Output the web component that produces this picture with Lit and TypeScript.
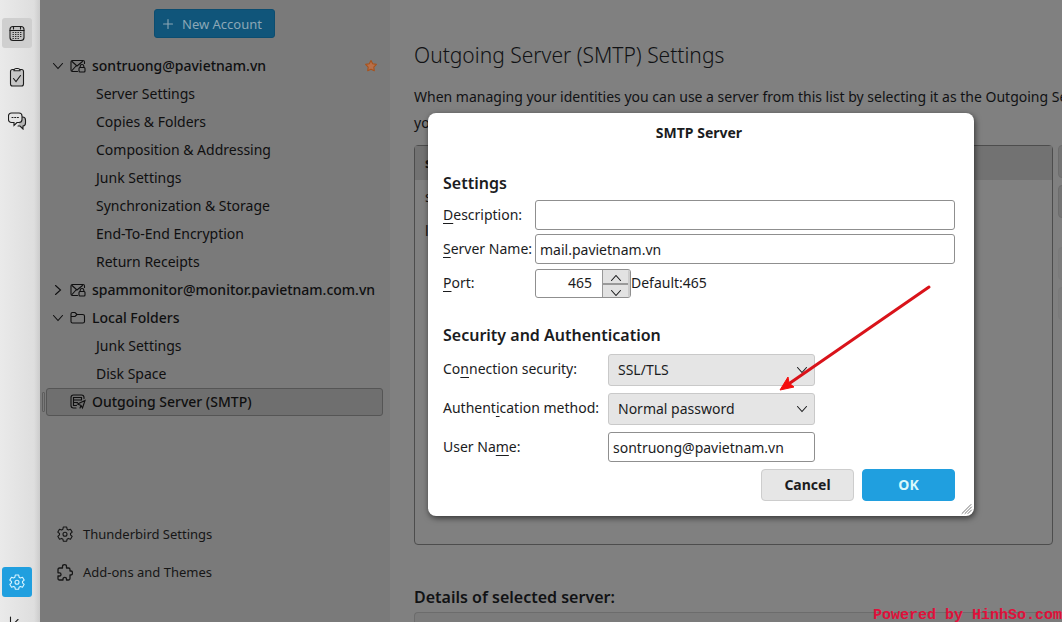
import { LitElement, html, css, svg, nothing } from "lit";
import { customElement, state } from "lit/decorators.js";
import { classMap } from "lit/directives/class-map.js";

const icons: Record<string, unknown> = {
  calendar: svg`<rect x="1" y="1.500" width="14" height="14" rx="3" fill="#0001"/><path d="M1 5.500h14M4.500 1.500v2.500M11.500 1.500v2.500"/><path d="M3.500 7.500h9M3.500 9.500h9M3.500 11.500h9M3.500 13.500h7" stroke-dasharray="1.400 1.100" stroke-linecap="butt" stroke-width="0.9"/>`,
  tasks: svg`<rect x="1.500" y="1.500" width="13" height="16.500" rx="2" fill="#0002"/><path d="M5 2c0-2 6-2 6 0v.8H5z" fill="#eee"/><path d="M4.500 10.500l2.500 3 4.500-6"/>`,
  chat: svg`<path d="M13.500 5h1c1.800 0 3 1.200 3 3v3c0 1.500-1 2.800-2.500 3v3l-3-3h-2" fill="#0003"/><path d="M3.500 1h7.500c1.800 0 3 1.200 3 3v3.500c0 1.800-1.200 3-3 3H9l-3 3v-3H3.500c-1.800 0-3-1.200-3-3V4c0-1.800 1.200-3 3-3z" fill="#e4e4e4"/><path d="M4 5.500h1M6.700 5.500h1M9.400 5.500h1"/>`,
  gear: svg`<path d="M6.300 1h3.400l.4 2.200 1.300.8 2.100-.8 1.700 2.900L13.500 7.500v1.300l1.700 1.500-1.700 2.900-2.100-.8-1.300.8-.4 2H6.300l-.4-2-1.300-.8-2.100.8L.8 10.300 2.500 8.800V7.500L.8 6.100l1.700-2.900 2.100.8 1.300-.8z" stroke-linejoin="round"/><circle cx="8" cy="8.200" r="2"/>`,
  addon: svg`<path d="M1 5.500c0-1 .5-1.500 1.500-1.500h3V2.500c0-2.400 4-2.400 4 0V4h2c1 0 1.500.5 1.500 1.500V7h.8c2.300 0 2.300 4 0 4H13v3.500c0 1-.5 1.500-1.500 1.500H9.500v-1c0-2.200-3.500-2.200-3.500 0v1H2.500C1.500 16 1 15.500 1 14.500V12h1.500c2 0 2-3.200 0-3.200H1z" stroke-width="1.300" stroke-linejoin="round"/>`,
  mail: svg`<path d="M7.500 13.500h-5c-1 0-1.500-.5-1.500-1.500V4c0-1 .5-1.500 1.500-1.500h10.500c1 0 1.500.5 1.500 1.500v1.500"/><path d="M2 3.500l5 4.500 5.500-4.500M2 12.500l4-4.500"/><rect x="9" y="9.500" width="6" height="4.500" rx="1"/><path d="M10.200 9.500V8c0-2 3.600-2 3.600 0v1.500"/>`,
  folder: svg`<path d="M1 4c0-1 .5-1.500 1.500-1.500H5l2 2h5.500c1.200 0 2 .6 2 1.500v5.500c0 1-.8 1.500-1.700 1.500H2.500c-1 0-1.500-.5-1.500-1.500zM1 6.500h4l2-2"/>`,
  outgoing: svg`<path d="M6 14H3.500C2 14 1 13 1 11.500v-8C1 2 2 1 3.500 1h8C13 1 14 2 14 3.500v1"/><path d="M3.500 3.500h8v2.500h-8zM3.500 6v5.500h3M3.500 8.500h4M7.500 10l7.500-3.500-2.500 7.500-1.500-2.500zM11 11.500l-1 2.500"/>`,
  down: svg`<path d="M3.500 5.500L8 10.500l4.500-5"/>`,
  right: svg`<path d="M5.500 3.500L10.500 8l-5 4.500"/>`,
  plus: svg`<path d="M8 3.500v9M3.500 8h9"/>`,
  star: svg`<path d="M8 2.500l1.700 3.300 3.700.6-2.600 2.700.5 3.700L8 11.200l-3.300 1.600.5-3.700-2.600-2.700 3.700-.6z" fill="#b8704a" stroke="#a8521c" stroke-linejoin="round"/>`,
  collapse: svg`<path d="M1.500 2v13M5 8.500h10M9 4.500l-4 4 4 4"/>`,
};

const icon = (name: string, w = 16, h = 16) =>
  html`<svg class="icon" width=${w} height=${h} viewBox="0 0 ${w} ${h}" aria-hidden="true">${icons[name]}</svg>`;

const iconStyles = css`
  .icon { display: block; flex: none; fill: none; stroke: currentColor; stroke-width: 1.1; stroke-linecap: round; }
  :host, *, *::before, *::after { box-sizing: border-box; }
  button, input, select { font: inherit; color: inherit; margin: 0; }
`;

@customElement("spaces-rail")
class SpacesRail extends LitElement {
  static styles = [iconStyles, css`
    :host { display: flex; flex-direction: column; gap: 14px; padding: 18px 8px 0 2px; color: #1c1c1c;
      background: linear-gradient(90deg, #eaeaea, #dedede 34px, #cccccc); overflow: hidden; }
    .space { flex: none; display: grid; place-items: center; width: 30px; height: 30px; border: 0; border-radius: 3px; background: none; padding: 0; }
    .current { background: #cfcfcf; }
    .settings { margin-top: auto; background: #209fdf; color: #d8f4ff; }
    .foot { height: 11px; padding-top: 4px; overflow: hidden; display: flex; justify-content: center; }
  `];
  render() {
    return html`
      <button class="space current" aria-label="Calendar">${icon("calendar", 16, 17)}</button>
      <button class="space" aria-label="Tasks">${icon("tasks", 16, 19)}</button>
      <button class="space" aria-label="Chat">${icon("chat", 19, 18)}</button>
      <button class="space settings" aria-label="Settings">${icon("gear")}</button>
      <div class="foot">${icon("collapse")}</div>
    `;
  }
}

interface AccountNode { label: string; icon: string; open?: boolean; star?: boolean; selected?: boolean; children?: string[]; }

const accounts: AccountNode[] = [
  { label: "sontruong@pavietnam.vn", icon: "mail", open: true, star: true,
    children: ["Server Settings", "Copies & Folders", "Composition & Addressing", "Junk Settings",
      "Synchronization & Storage", "End-To-End Encryption", "Return Receipts"] },
  { label: "spammonitor@monitor.pavietnam.com.vn", icon: "mail", open: false },
  { label: "Local Folders", icon: "folder", open: true, children: ["Junk Settings", "Disk Space"] },
  { label: "Outgoing Server (SMTP)", icon: "outgoing", selected: true },
];

@customElement("account-sidebar")
class AccountSidebar extends LitElement {
  static styles = [iconStyles, css`
    :host { display: flex; flex-direction: column; background: #7a7a7a; color: #0f0f10; min-width: 0; }
    .new { align-self: center; display: flex; align-items: center; gap: 6px; height: 29px; margin: 9px 1px 14px 0;
      padding: 0 12px 0 5px; border: 1px solid #0c4d70; border-radius: 3px; background: #10557a; color: #8ba7b6; font-size: 13px; }
    ul { list-style: none; margin: 0; padding: 0; }
    .row { display: flex; align-items: center; height: 28px; padding: 0 11px; text-decoration: none; color: inherit; white-space: nowrap;
      border: 1px solid transparent; border-radius: 3px; margin: 0 7px 0 6px; }
    .top { padding: 0 3px; font-weight: 500; }
    .twisty { width: 16px; margin-right: 4px; }
    .label { margin-left: 6px; flex: 1; }
    .child { padding-left: 49px; }
    .selected { background: #6f6f6f; border-color: #555; }
    .grip { position: relative; }
    .grip::before { content: ""; position: absolute; left: 2px; top: 4px; width: 3px; height: 20px; border: 1px solid #5d5d5d; border-radius: 1px; }
    .links { margin-top: auto; padding-bottom: 31px; font-size: 13px; }
    .link { display: flex; align-items: center; gap: 10px; height: 38px; padding-left: 17px; color: #161616; text-decoration: none; }
  `];
  render() {
    return html`
      <button class="new">${icon("plus")}<span>New Account</span></button>
      <ul>
        ${accounts.map((a) => html`
          <li class=${classMap({ grip: !!a.selected })}>
            <a href="#" class=${classMap({ row: true, top: true, selected: !!a.selected })}>
              <span class="twisty">${a.open === undefined ? nothing : icon(a.open ? "down" : "right")}</span>
              ${icon(a.icon)}<span class="label">${a.label}</span>${a.star ? icon("star") : nothing}
            </a>
            ${a.children ? html`<ul>${a.children.map((c) => html`<li><a href="#" class="row child">${c}</a></li>`)}</ul>` : nothing}
          </li>`)}
      </ul>
      <div class="links">
        <a class="link" href="#">${icon("gear")}Thunderbird Settings</a>
        <a class="link" href="#">${icon("addon", 16, 17)}Add-ons and Themes</a>
      </div>
    `;
  }
}

@customElement("smtp-pane")
class SmtpPane extends LitElement {
  static styles = [iconStyles, css`
    :host { display: block; background: #808080; color: #111214; padding: 40px 0 0 24px; overflow: hidden; min-width: 0; }
    h1 { margin: 0 0 14px; font-size: 21px; line-height: 30px; font-weight: 300; white-space: nowrap; }
    p { margin: 0 0 9px; line-height: 26px; white-space: nowrap; }
    .servers { display: flex; gap: 5px; }
    .list { flex: 1; height: 400px; margin: 0; padding: 0; list-style: none; border: 1px solid #4d4d4d; border-radius: 4px; }
    .list li { height: 34px; line-height: 34px; padding-left: 10px; }
    .list .default { background: #727272; font-weight: 700; }
    .actions { width: 4px; overflow: hidden; display: flex; flex-direction: column; gap: 7px; }
    .action { flex: none; width: 120px; height: 33px; border: 1px solid #6c6c6c; border-radius: 4px; background: #747474; }
    .dim { background: #7c7c7c; border-color: #7a7a7a; }
    .gap { margin-top: 22px; }
    h2 { margin: 38px 0 1px; font-size: 16px; line-height: 28px; font-weight: 600; }
    .details { height: 120px; border: 1px solid #6c6c6c; border-right: 0; border-radius: 4px 0 0 0; background: #7b7b7b; }
  `];
  render() {
    return html`
      <h1>Outgoing Server (SMTP) Settings</h1>
      <p>When managing your identities you can use a server from this list by selecting it as the Outgoing Server (SMTP), or<br>you can use the default server.</p>
      <div class="servers">
        <ul class="list">
          <li class="default">sontruong</li>
          <li>spammonitor</li>
          <li>localhost</li>
        </ul>
        <div class="actions">
          <button class="action" aria-label="Add"></button>
          <button class="action" aria-label="Edit"></button>
          <button class="action dim gap" aria-label="Remove"></button>
          <button class="action dim" aria-label="Set Default"></button>
        </div>
      </div>
      <h2>Details of selected server:</h2>
      <div class="details"></div>
    `;
  }
}

@customElement("smtp-dialog")
class SmtpDialog extends LitElement {
  @state() private port = 465;
  static styles = [iconStyles, css`
    :host { display: flex; flex-direction: column; background: #fff; color: #1b1c1e; border-radius: 8px; padding: 0 19px 15px 15px;
      box-shadow: 1px 2px 6px #0009; }
    .title { margin: 0; text-align: center; font-size: 14px; line-height: 40px; font-weight: 700; }
    h3 { margin: 0; font-size: 16px; line-height: 24px; font-weight: 600; }
    .server { margin: 18px 0 25px; }
    .rows { display: grid; grid-template-columns: 92px 1fr; row-gap: 4px; margin-top: 5px; }
    .auth { grid-template-columns: 165px 207px; row-gap: 7px; margin-top: 7px; }
    label { line-height: 30px; white-space: nowrap; }
    .rows:not(.auth) label { line-height: 29px; }
    u { text-underline-offset: 3px; text-decoration-thickness: 1px; }
    .text { width: 100%; height: 30px; padding: 0 4px; border: 1px solid #8f8f8f; border-radius: 3px; background: #fff; }
    .port { display: flex; align-items: center; height: 30px; }
    .spin { display: flex; width: 96px; height: 29px; border: 1px solid #8f8f8f; border-radius: 3px; overflow: hidden; }
    .num { flex: 1; min-width: 0; border: 0; padding: 0 10px 0 0; text-align: right; background: none; appearance: textfield; }
    .num::-webkit-inner-spin-button { display: none; }
    .steps { display: grid; grid-template-rows: 1fr 1fr; width: 28px; border-left: 1px solid #999; border-right: 2px solid #ccc; }
    .step { display: grid; place-items: center; border: 0; padding: 0; background: #e2e2e2; overflow: hidden; min-height: 0; }
    .step + .step { border-top: 2px solid #999; }
    .up .icon { transform: rotate(180deg); }
    .pick { display: grid; align-items: center; height: 32px; }
    .pick > * { grid-area: 1 / 1; }
    .pick .icon { justify-self: end; margin-right: 5px; pointer-events: none; }
    select { width: 100%; height: 32px; appearance: none; border: 1px solid #c9c9c9; border-radius: 3px; background: #e5e5e5; padding: 0 9px; }
    .buttons { display: flex; justify-content: flex-end; gap: 8px; margin-top: 7px; }
    .btn { width: 93px; height: 32px; border: 1px solid #cdcdcd; border-radius: 4px; background: #e6e6e6; font-weight: 700; padding: 0; }
    .primary { border-color: #209fdf; background: #209fdf; color: #d9f8fb; }
    .resize { position: absolute; right: 0; bottom: 0; color: #777; stroke-width: 1; }
  `];
  render() {
    return html`
      <h2 class="title">SMTP Server</h2>
      <section class="server">
        <h3>Settings</h3>
        <div class="rows">
          <label for="desc"><u>D</u>escription:</label>
          <input id="desc" class="text" type="text">
          <label for="host"><u>S</u>erver Name:</label>
          <input id="host" class="text" type="text" .value=${"mail.pavietnam.vn"}>
          <label for="port"><u>P</u>ort:</label>
          <div class="port">
            <div class="spin">
              <input id="port" class="num" type="number" .value=${String(this.port)}>
              <div class="steps">
                <button class="step up" aria-label="Increase" @click=${() => this.port++}>${icon("down")}</button>
                <button class="step" aria-label="Decrease" @click=${() => this.port--}>${icon("down")}</button>
              </div>
            </div>
            <span>Default:465</span>
          </div>
        </div>
      </section>
      <section>
        <h3>Security and Authentication</h3>
        <div class="rows auth">
          <label for="sec">Co<u>n</u>nection security:</label>
          <div class="pick"><select id="sec"><option>SSL/TLS</option><option>STARTTLS</option><option>None</option></select>${icon("down")}</div>
          <label for="method">Authent<u>i</u>cation method:</label>
          <div class="pick"><select id="method"><option>Normal password</option><option>OAuth2</option></select>${icon("down")}</div>
          <label for="user">User Na<u>m</u>e:</label>
          <input id="user" class="text" type="text" .value=${"sontruong@pavietnam.vn"}>
        </div>
      </section>
      <div class="buttons">
        <button class="btn">Cancel</button>
        <button class="btn primary">OK</button>
      </div>
      <svg class="icon resize" width="14" height="14" viewBox="0 0 14 14" aria-hidden="true"><path d="M2 11.500L11 2.500M5 11.500l6.500-6.500M8 11.500l3.500-3.500"/></svg>
    `;
  }
}

@customElement("app-root")
class AppRoot extends LitElement {
  static styles = css`
    :host { display: grid; grid-template-columns: 40px 350px minmax(0, 1fr); height: 100vh; overflow: hidden; position: relative;
      font-family: "Noto Sans", sans-serif; font-size: 14px; line-height: 20px; }
    .dialog { position: absolute; left: 428px; top: 113px; width: 546px; }
    .arrow { position: absolute; left: 772px; top: 280px; pointer-events: none; }
    .mark { position: absolute; right: 0; bottom: 0; color: #e0103a; font: 700 15px/12px "Liberation Mono", monospace; white-space: nowrap; }
  `;
  render() {
    return html`
      <spaces-rail></spaces-rail>
      <account-sidebar></account-sidebar>
      <smtp-pane></smtp-pane>
      <smtp-dialog class="dialog" role="dialog" aria-label="SMTP Server"></smtp-dialog>
      <svg class="arrow" width="164" height="116" viewBox="0 0 164 116" aria-hidden="true">
        <path d="M157 7L18 103" stroke="#d9131a" stroke-width="3" stroke-linecap="round"/>
        <path d="M8 110L16 97L17 103L22 107z" fill="#f40d0d" stroke="#f40d0d" stroke-width="1"/>
      </svg>
      <span class="mark">Powered by HinhSo.com</span>
    `;
  }
}
